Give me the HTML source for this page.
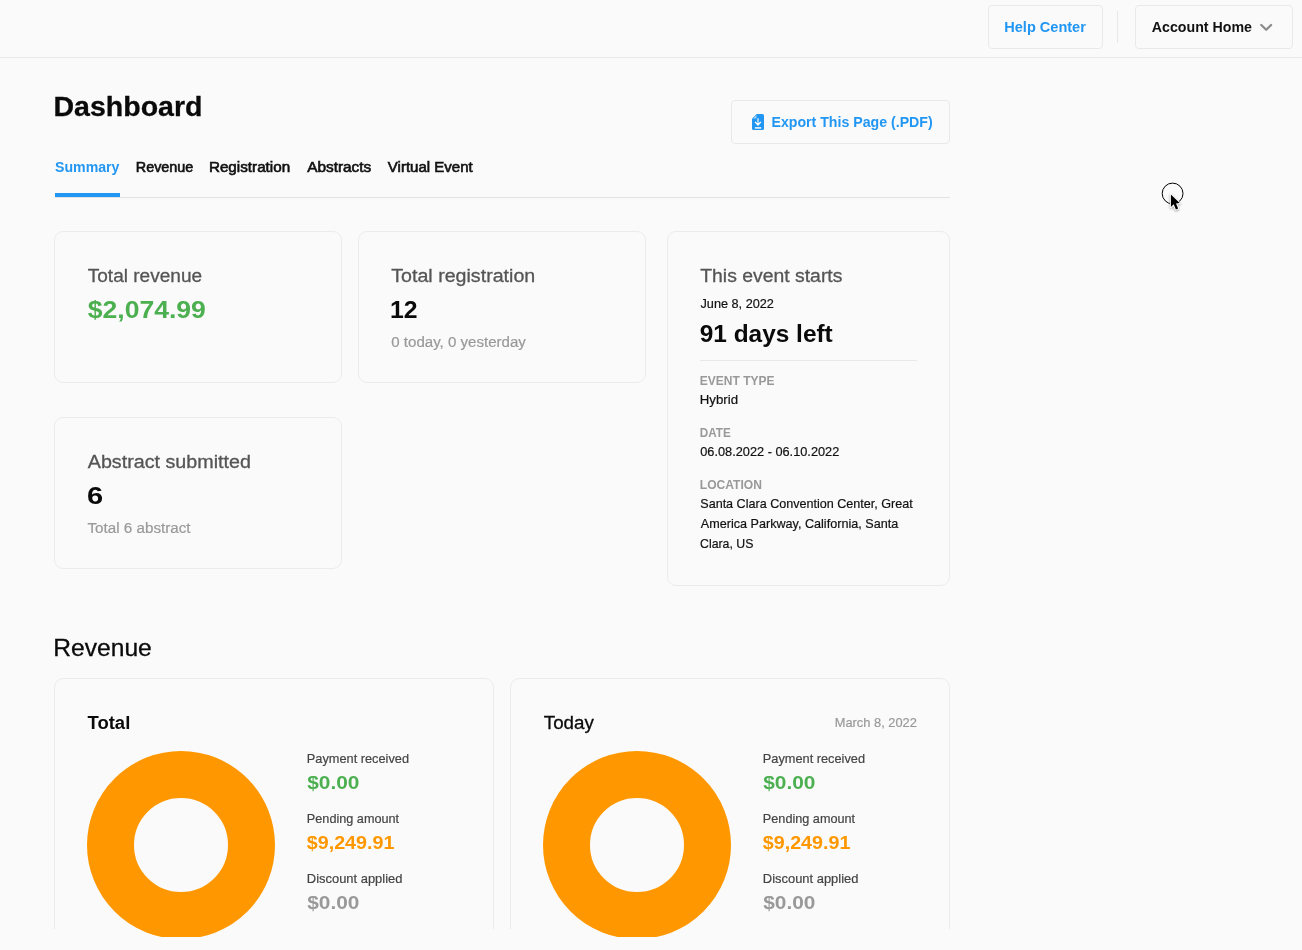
<!DOCTYPE html>
<html lang="en">
<head>
<meta charset="utf-8">
<title>Dashboard</title>
<style>
*{box-sizing:border-box;margin:0;padding:0}
html,body{width:1302px;height:950px;overflow:hidden;background:#fafafa}
body{position:relative;font-family:"Liberation Sans",Arial,sans-serif;-webkit-font-smoothing:antialiased}
.abs{position:absolute}
.t{position:absolute;white-space:nowrap;display:block;transform-origin:0 0}
.box{position:absolute;border:1px solid #e6e6e6}
.card{border-radius:9px;border-color:#ebebeb;background:transparent}
.btn{border-radius:4px;border-color:#e9e9e9;background:transparent}
.line{position:absolute;background:#e4e4e4}
#clip{position:absolute;left:0;top:0;width:1302px;height:937px;overflow:hidden;will-change:transform}
#cardclip{position:absolute;left:0;top:0;width:1302px;height:929px;overflow:hidden}
</style>
</head>
<body>
<div id="clip">
<!-- header -->
<div class="line" style="left:0;top:57px;width:1302px;height:1px;background:#eaeaea"></div>
<div class="box btn" style="left:988px;top:5px;width:115px;height:44px"></div>
<div class="line" style="left:1117px;top:11px;width:1px;height:32px;background:#e8e8e8"></div>
<div class="box btn" style="left:1135px;top:5px;width:158px;height:44px"></div>
<svg class="abs" style="left:1258px;top:21px" width="16" height="13" viewBox="0 0 16 13"><path d="M3.3 4 L8.2 8.8 L13.1 4" fill="none" stroke="#8c8c8c" stroke-width="2.3" stroke-linecap="round" stroke-linejoin="round"/></svg>

<!-- export button -->
<div class="box btn" style="left:731px;top:100px;width:219px;height:44px"></div>
<svg class="abs" style="left:752px;top:114px" width="12" height="16" viewBox="0 0 12 16">
<path d="M4.7 0 H10.4 A1.6 1.6 0 0 1 12 1.6 V14.4 A1.6 1.6 0 0 1 10.4 16 H1.6 A1.6 1.6 0 0 1 0 14.4 V4.7 Z" fill="#2196f3"/>
<path d="M1.1 4.5 L4.5 1.1 V3.5 A1 1 0 0 1 3.5 4.5 Z" fill="#a6d4fb"/>
<rect x="5.3" y="4.4" width="1.4" height="4.4" fill="#dceefd"/>
<path d="M2.6 8.3 L3.4 7.6 L5.2 9.1 H6.8 L8.6 7.6 L9.4 8.3 L6 12 Z" fill="#fff"/>
<rect x="2.9" y="13" width="6.3" height="1.8" fill="#d4eafd"/>
</svg>

<!-- tabs -->
<div class="line" style="left:55px;top:197px;width:895px;height:1px;background:#e2e2e2"></div>
<div class="line" style="left:55px;top:193px;width:65px;height:4px;background:#2196f3"></div>

<!-- summary cards -->
<div class="box card" style="left:54px;top:231px;width:288px;height:152px"></div>
<div class="box card" style="left:358px;top:231px;width:288px;height:152px"></div>
<div class="box card" style="left:667px;top:231px;width:283px;height:355px"></div>
<div class="line" style="left:700px;top:360px;width:217px;height:1px;background:#e9e9e9"></div>
<div class="box card" style="left:54px;top:417px;width:288px;height:152px"></div>

<!-- revenue cards -->
<div id="cardclip">
<div class="box card" style="left:54px;top:678px;width:440px;height:320px"></div>
<div class="box card" style="left:510px;top:678px;width:440px;height:320px"></div>
</div>
<svg class="abs" style="left:86px;top:750px" width="190" height="190" viewBox="-95 -95 190 190"><circle cx="0" cy="0" r="70.5" fill="none" stroke="#ff9800" stroke-width="47"/></svg>
<svg class="abs" style="left:542px;top:750px" width="190" height="190" viewBox="-95 -95 190 190"><circle cx="0" cy="0" r="70.5" fill="none" stroke="#ff9800" stroke-width="47"/></svg>

<span class="t" id="help" style="left:1004px;top:19px;font-size:14px;line-height:16px;font-weight:700;color:#2196f3;transform:translateX(0.25px) scaleX(1.0387);">Help Center</span>
<span class="t" id="acct" style="left:1151px;top:19px;font-size:14px;line-height:16px;font-weight:700;color:#111;transform:translateX(0.75px) scaleX(1.0147);">Account Home</span>
<span class="t" id="dash" style="left:53px;top:91px;font-size:28px;line-height:31px;font-weight:700;color:#0a0a0a;transform:translateX(0.50px) scaleX(1.0187);-webkit-text-stroke:0.3px #0a0a0a;">Dashboard</span>
<span class="t" id="export" style="left:771px;top:114px;font-size:14px;line-height:16px;font-weight:700;color:#2196f3;transform:translateX(0.45px) scaleX(1.0111);">Export This Page (.PDF)</span>
<span class="t" id="tab1" style="left:55px;top:159px;font-size:14px;line-height:16px;font-weight:700;color:#2196f3;transform:translateX(0.00px) scaleX(1.0097);">Summary</span>
<span class="t" id="tab2" style="left:135px;top:159px;font-size:14px;line-height:16px;font-weight:400;color:#111;transform:translateX(0.75px) scaleX(1.0271);-webkit-text-stroke:0.6px #111;">Revenue</span>
<span class="t" id="tab3" style="left:208px;top:159px;font-size:14px;line-height:16px;font-weight:400;color:#111;transform:translateX(0.90px) scaleX(1.0879);-webkit-text-stroke:0.6px #111;">Registration</span>
<span class="t" id="tab4" style="left:307px;top:159px;font-size:14px;line-height:16px;font-weight:400;color:#111;transform:translateX(0.20px) scaleX(1.0977);-webkit-text-stroke:0.6px #111;">Abstracts</span>
<span class="t" id="tab5" style="left:387px;top:159px;font-size:14px;line-height:16px;font-weight:400;color:#111;transform:translateX(0.85px) scaleX(1.0720);-webkit-text-stroke:0.6px #111;">Virtual Event</span>
<span class="t" id="c1l" style="left:87px;top:266px;font-size:18px;line-height:20px;font-weight:400;color:#555;transform:translateX(0.75px) scaleX(1.0578);-webkit-text-stroke:0.3px #555;">Total revenue</span>
<span class="t" id="c1v" style="left:87px;top:296px;font-size:24px;line-height:27px;font-weight:700;color:#4caf50;transform:translateX(0.75px) scaleX(1.1062);">$2,074.99</span>
<span class="t" id="c2l" style="left:391px;top:266px;font-size:18px;line-height:20px;font-weight:400;color:#555;transform:translateX(0.25px) scaleX(1.0901);-webkit-text-stroke:0.3px #555;">Total registration</span>
<span class="t" id="c2v" style="left:390px;top:296px;font-size:24px;line-height:27px;font-weight:700;color:#0a0a0a;transform:translateX(0.00px) scaleX(1.0309);">12</span>
<span class="t" id="c2s" style="left:391px;top:334px;font-size:14px;line-height:16px;font-weight:400;color:#999;transform:translateX(0.25px) scaleX(1.0768);-webkit-text-stroke:0.2px #999;">0 today, 0 yesterday</span>
<span class="t" id="c3l" style="left:700px;top:266px;font-size:18px;line-height:20px;font-weight:400;color:#555;transform:translateX(0.25px) scaleX(1.0766);-webkit-text-stroke:0.3px #555;">This event starts</span>
<span class="t" id="c3d" style="left:700px;top:296px;font-size:13px;line-height:15px;font-weight:400;color:#111;transform:translateX(0.50px) scaleX(0.9761);-webkit-text-stroke:0.2px #111;">June 8, 2022</span>
<span class="t" id="c3v" style="left:699px;top:320px;font-size:24px;line-height:27px;font-weight:700;color:#0a0a0a;transform:translateX(0.75px) scaleX(1.0173);">91 days left</span>
<span class="t" id="c3a" style="left:699px;top:374px;font-size:12px;line-height:14px;font-weight:700;color:#999;transform:translateX(0.75px) scaleX(1.0011);">EVENT TYPE</span>
<span class="t" id="c3b" style="left:699px;top:392px;font-size:13px;line-height:15px;font-weight:400;color:#111;transform:translateX(0.75px) scaleX(1.0184);-webkit-text-stroke:0.2px #111;">Hybrid</span>
<span class="t" id="c3c" style="left:699px;top:426px;font-size:12px;line-height:14px;font-weight:700;color:#999;transform:translateX(0.75px) scaleX(0.9757);">DATE</span>
<span class="t" id="c3e" style="left:700px;top:444px;font-size:13px;line-height:15px;font-weight:400;color:#111;transform:translateX(0.25px) scaleX(0.9813);-webkit-text-stroke:0.2px #111;">06.08.2022 - 06.10.2022</span>
<span class="t" id="c3f" style="left:699px;top:478px;font-size:12px;line-height:14px;font-weight:700;color:#999;transform:translateX(0.75px) scaleX(1.0069);">LOCATION</span>
<span class="t" id="c3g" style="left:700px;top:496px;font-size:13px;line-height:15px;font-weight:400;color:#111;transform:translateX(0.25px) scaleX(0.9675);-webkit-text-stroke:0.2px #111;">Santa Clara Convention Center, Great</span>
<span class="t" id="c3h" style="left:700px;top:516px;font-size:13px;line-height:15px;font-weight:400;color:#111;transform:translateX(0.75px) scaleX(0.9702);-webkit-text-stroke:0.2px #111;">America Parkway, California, Santa</span>
<span class="t" id="c3i" style="left:700px;top:536px;font-size:13px;line-height:15px;font-weight:400;color:#111;transform:translateX(0.00px) scaleX(0.9487);-webkit-text-stroke:0.2px #111;">Clara, US</span>
<span class="t" id="c4l" style="left:87px;top:452px;font-size:18px;line-height:20px;font-weight:400;color:#555;transform:translateX(0.75px) scaleX(1.0948);-webkit-text-stroke:0.3px #555;">Abstract submitted</span>
<span class="t" id="c4v" style="left:87px;top:482px;font-size:24px;line-height:27px;font-weight:700;color:#0a0a0a;transform:translateX(0.00px) scaleX(1.2099);">6</span>
<span class="t" id="c4s" style="left:87px;top:520px;font-size:14px;line-height:16px;font-weight:400;color:#999;transform:translateX(0.50px) scaleX(1.0852);-webkit-text-stroke:0.2px #999;">Total 6 abstract</span>
<span class="t" id="rev" style="left:53px;top:634px;font-size:24px;line-height:27px;font-weight:400;color:#0a0a0a;transform:translateX(0.25px) scaleX(1.0258);-webkit-text-stroke:0.3px #0a0a0a;">Revenue</span>
<span class="t" id="r1t" style="left:87px;top:713px;font-size:18px;line-height:20px;font-weight:700;color:#0a0a0a;transform:translateX(0.50px) scaleX(1.0268);">Total</span>
<span class="t" id="r1a" style="left:306px;top:751px;font-size:13px;line-height:15px;font-weight:400;color:#444;transform:translateX(0.85px) scaleX(0.9819);-webkit-text-stroke:0.2px #444;">Payment received</span>
<span class="t" id="r1b" style="left:307px;top:773px;font-size:18px;line-height:20px;font-weight:700;color:#4caf50;transform:translateX(0.25px) scaleX(1.1582);">$0.00</span>
<span class="t" id="r1c" style="left:306px;top:811px;font-size:13px;line-height:15px;font-weight:400;color:#444;transform:translateX(0.85px) scaleX(0.9741);-webkit-text-stroke:0.2px #444;">Pending amount</span>
<span class="t" id="r1d" style="left:306px;top:833px;font-size:18px;line-height:20px;font-weight:700;color:#ff9800;transform:translateX(0.75px) scaleX(1.0947);">$9,249.91</span>
<span class="t" id="r1e" style="left:306px;top:871px;font-size:13px;line-height:15px;font-weight:400;color:#444;transform:translateX(0.85px) scaleX(0.9940);-webkit-text-stroke:0.2px #444;">Discount applied</span>
<span class="t" id="r1f" style="left:307px;top:893px;font-size:18px;line-height:20px;font-weight:700;color:#999;transform:translateX(0.25px) scaleX(1.1578);">$0.00</span>
<span class="t" id="r2t" style="left:543px;top:713px;font-size:18px;line-height:20px;font-weight:400;color:#0a0a0a;transform:translateX(0.75px) scaleX(1.0418);-webkit-text-stroke:0.3px #0a0a0a;">Today</span>
<span class="t" id="r2m" style="left:834px;top:715px;font-size:13px;line-height:15px;font-weight:400;color:#999;transform:translateX(0.75px) scaleX(0.9877);-webkit-text-stroke:0.2px #999;">March 8, 2022</span>
<span class="t" id="r2a" style="left:762px;top:751px;font-size:13px;line-height:15px;font-weight:400;color:#444;transform:translateX(0.85px) scaleX(0.9819);-webkit-text-stroke:0.2px #444;">Payment received</span>
<span class="t" id="r2b" style="left:763px;top:773px;font-size:18px;line-height:20px;font-weight:700;color:#4caf50;transform:translateX(0.25px) scaleX(1.1582);">$0.00</span>
<span class="t" id="r2c" style="left:762px;top:811px;font-size:13px;line-height:15px;font-weight:400;color:#444;transform:translateX(0.85px) scaleX(0.9741);-webkit-text-stroke:0.2px #444;">Pending amount</span>
<span class="t" id="r2d" style="left:762px;top:833px;font-size:18px;line-height:20px;font-weight:700;color:#ff9800;transform:translateX(0.75px) scaleX(1.0947);">$9,249.91</span>
<span class="t" id="r2e" style="left:762px;top:871px;font-size:13px;line-height:15px;font-weight:400;color:#444;transform:translateX(0.85px) scaleX(0.9940);-webkit-text-stroke:0.2px #444;">Discount applied</span>
<span class="t" id="r2f" style="left:763px;top:893px;font-size:18px;line-height:20px;font-weight:700;color:#999;transform:translateX(0.25px) scaleX(1.1578);">$0.00</span>
<!-- pointer -->
<svg class="abs" style="left:1156px;top:177px" width="34" height="38" viewBox="1156 177 34 38">
<circle cx="1172.6" cy="193.5" r="10.4" fill="none" stroke="#000" stroke-width="1"/>
<g style="filter:drop-shadow(0 1px 1.2px rgba(0,0,0,.35))"><path d="M1170.9 194.4 V206.9 L1173.7 204.3 L1175.9 209.4 L1178.2 208.4 L1176 203.4 L1179.7 203.1 Z" fill="#fff" stroke="#fff" stroke-width="2" stroke-linejoin="round"/></g>
<path d="M1170.9 194.4 V206.9 L1173.7 204.3 L1175.9 209.4 L1178.2 208.4 L1176 203.4 L1179.7 203.1 Z" fill="#000"/>
</svg>
</div>
</body>
</html>
